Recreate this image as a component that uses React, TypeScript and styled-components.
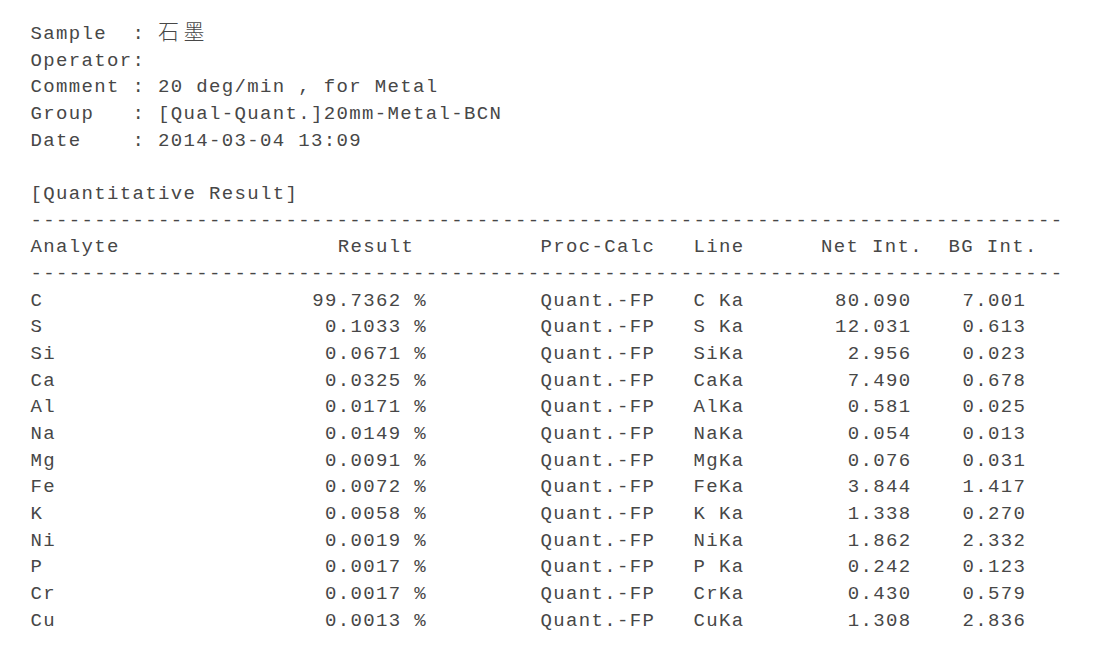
import React from "react";
import styled, { createGlobalStyle } from "styled-components";

const CW = 12.75; // advance width of one character cell
const LS = 1.35; // letter spacing added to 19px Liberation Mono
const LH = 26.67;
const px = (n: number) => `${n * CW}px`;

const Global = createGlobalStyle`
  html, body { margin: 0; padding: 0; background: #ffffff; }
`;

const Page = styled.div`
  padding: 21px 0 0 30.5px;
  font-family: "Liberation Mono", "Courier New", monospace;
  font-size: 19px;
  letter-spacing: ${LS}px;
  line-height: ${LH}px;
  color: #474747;
  white-space: pre;
`;

const Meta = styled.div`
  display: grid;
  grid-template-columns: ${px(8)} ${px(2)} auto;
  height: ${LH}px;
`;

const MetaLabel = styled.span``;
const MetaColon = styled.span``;
const MetaValue = styled.span``;

const Cjk = styled.span`
  font-family: "Noto Sans CJK SC", "Noto Sans CJK JP", sans-serif;
  font-size: 21px;
  line-height: 0;
  letter-spacing: 4.5px;
  font-weight: 300;
`;

const SectionTitle = styled.div`
  margin-top: ${LH}px;
`;

const Rule = styled.div`
  overflow: hidden;
`;

const Table = styled.div`
  display: grid;
  grid-template-columns: ${px(22)} ${px(18)} ${px(12)} ${px(10)} ${px(8)} ${px(9)};
`;

const Cell = styled.span<{ $right?: boolean; $pad?: number }>`
  text-align: ${(p) => (p.$right ? "right" : "left")};
  padding-right: ${(p) =>
    p.$right ? `calc(${(p.$pad ?? 0) * CW}px - ${LS}px)` : "0"};
`;

type Row = [string, string, string, string, string];

const rows: Row[] = [
  ["C", "99.7362", "C Ka", "80.090", "7.001"],
  ["S", "0.1033", "S Ka", "12.031", "0.613"],
  ["Si", "0.0671", "SiKa", "2.956", "0.023"],
  ["Ca", "0.0325", "CaKa", "7.490", "0.678"],
  ["Al", "0.0171", "AlKa", "0.581", "0.025"],
  ["Na", "0.0149", "NaKa", "0.054", "0.013"],
  ["Mg", "0.0091", "MgKa", "0.076", "0.031"],
  ["Fe", "0.0072", "FeKa", "3.844", "1.417"],
  ["K", "0.0058", "K Ka", "1.338", "0.270"],
  ["Ni", "0.0019", "NiKa", "1.862", "2.332"],
  ["P", "0.0017", "P Ka", "0.242", "0.123"],
  ["Cr", "0.0017", "CrKa", "0.430", "0.579"],
  ["Cu", "0.0013", "CuKa", "1.308", "2.836"],
];

const meta: [string, React.ReactNode][] = [
  ["Sample", <Cjk>石墨</Cjk>],
  ["Operator", ""],
  ["Comment", "20 deg/min , for Metal"],
  ["Group", "[Qual-Quant.]20mm-Metal-BCN"],
  ["Date", "2014-03-04 13:09"],
];

const dashes = "-".repeat(81);

export default function App() {
  return (
    <>
      <Global />
      <Page>
        {meta.map(([label, value]) => (
          <Meta key={label}>
            <MetaLabel>{label}</MetaLabel>
            <MetaColon>{":"}</MetaColon>
            <MetaValue>{value}</MetaValue>
          </Meta>
        ))}
        <SectionTitle>[Quantitative Result]</SectionTitle>
        <Rule>{dashes}</Rule>
        <Table>
          <Cell>Analyte</Cell>
          <Cell $right $pad={10}>Result</Cell>
          <Cell>Proc-Calc</Cell>
          <Cell>Line</Cell>
          <Cell $right $pad={0}>Net Int.</Cell>
          <Cell $right $pad={0}>BG Int.</Cell>
        </Table>
        <Rule>{dashes}</Rule>
        <Table>
          {rows.map(([el, res, line, net, bg]) => (
            <React.Fragment key={el}>
              <Cell>{el}</Cell>
              <Cell $right $pad={9}>{`${res} %`}</Cell>
              <Cell>Quant.-FP</Cell>
              <Cell>{line}</Cell>
              <Cell $right $pad={1}>{net}</Cell>
              <Cell $right $pad={1}>{bg}</Cell>
            </React.Fragment>
          ))}
        </Table>
      </Page>
    </>
  );
}
